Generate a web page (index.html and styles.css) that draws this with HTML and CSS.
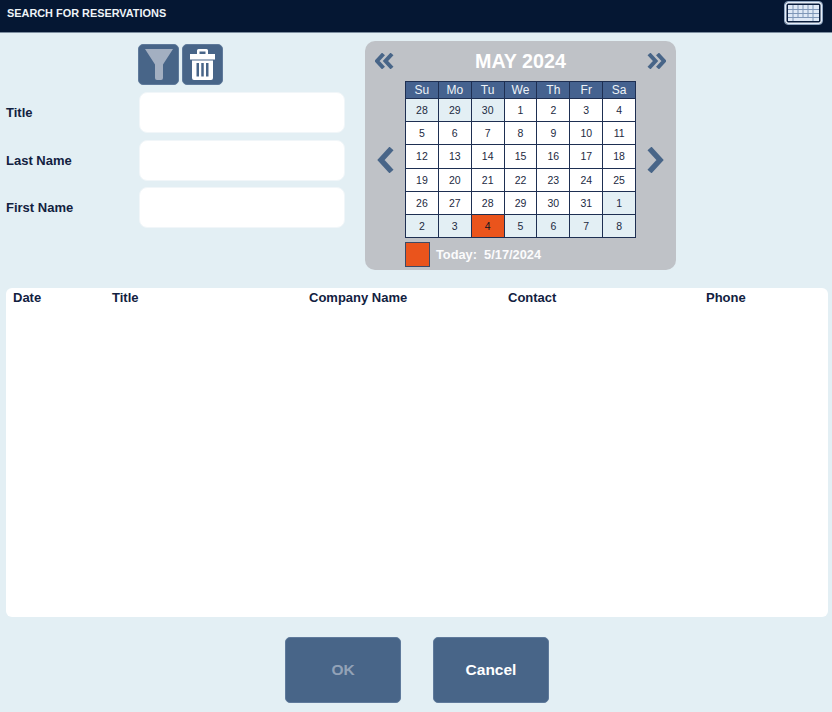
FILE: index.html
```html
<!DOCTYPE html>
<html>
<head>
    <title>Search for Reservations</title>
    <link rel="stylesheet" href="styles.css">
</head>
<body>
    <div class="title-bar">
        <span class="title-text">SEARCH FOR RESERVATIONS</span>
        <button class="keyboard-btn">
            <svg width="39" height="24" viewBox="0 0 39 24">
                <rect x="0.500" y="0.500" width="38" height="23" rx="3.500" fill="#0a1d3c" stroke="#8fa6c2" stroke-width="1"/>
                <rect x="1.750" y="1.750" width="35.500" height="20.500" rx="2.500" fill="#0a1d3c" stroke="#e6eef8" stroke-width="1.500"/>
                <rect x="4" y="4" width="31" height="16" fill="#dfe9f6"/>
                <path d="M4 8.500H35M4 12.500H35M4 16.500H35M9 4V16.500M14 4V16.500M19 4V16.500M24 4V16.500M29 4V16.500M9 16.500V20M29 16.500V20" stroke="#7f97b8" stroke-width="1" fill="none"/>
            </svg>
        </button>
    </div>

    <div class="top-section">
        <div class="search-form">
            <div class="tool-buttons">
                <button class="tool-btn">
                    <svg width="28" height="31" viewBox="0 0 28 31">
                        <path d="M0 0H28L18 15.500V29Q18 31 16 31H12Q10 31 10 29V15.500Z" fill="#a3afc1"/>
                    </svg>
                </button>
                <button class="tool-btn">
                    <svg width="25" height="31" viewBox="0 0 25 31">
                        <path d="M0 5H7V1.500Q7 0 8.500 0H16.500Q18 0 18 1.500V5H25V10.500H0ZM9.500 2.500V5H15.500V2.500Z" fill="#fff" fill-rule="evenodd"/>
                        <path d="M2 11.500H23V29Q23 31 21 31H4Q2 31 2 29ZM6.500 14V27.500H9V14ZM11.250 14V27.500H13.750V14ZM16 14V27.500H18.500V14Z" fill="#fff" fill-rule="evenodd"/>
                    </svg>
                </button>
            </div>
            <div class="form-row">
                <label class="field-label">Title</label>
                <input class="field-input" type="text">
            </div>
            <div class="form-row">
                <label class="field-label">Last Name</label>
                <input class="field-input" type="text">
            </div>
            <div class="form-row">
                <label class="field-label">First Name</label>
                <input class="field-input" type="text">
            </div>
        </div>

        <div class="calendar-panel">
            <svg class="year-arrow" width="20" height="16" viewBox="0 0 20 16">
                <path d="M8.500 1L2 8L8.500 15M17 1L10.500 8L17 15" fill="none" stroke="#486588" stroke-width="4"/>
            </svg>
            <div class="month-title">MAY 2024</div>
            <svg class="year-arrow" width="20" height="16" viewBox="0 0 20 16">
                <path d="M3 1L9.500 8L3 15M11.500 1L18 8L11.500 15" fill="none" stroke="#486588" stroke-width="4"/>
            </svg>

            <svg class="month-arrow" width="18" height="26" viewBox="0 0 18 26">
                <path d="M15.500 1.500L5 13L15.500 24.500" fill="none" stroke="#486588" stroke-width="5.500"/>
            </svg>
            <div class="calendar-grid">
                <div class="day-name">Su</div>
                <div class="day-name">Mo</div>
                <div class="day-name">Tu</div>
                <div class="day-name">We</div>
                <div class="day-name">Th</div>
                <div class="day-name">Fr</div>
                <div class="day-name">Sa</div>

                <div class="day other">28</div>
                <div class="day other">29</div>
                <div class="day other">30</div>
                <div class="day">1</div>
                <div class="day">2</div>
                <div class="day">3</div>
                <div class="day">4</div>

                <div class="day">5</div>
                <div class="day">6</div>
                <div class="day">7</div>
                <div class="day">8</div>
                <div class="day">9</div>
                <div class="day">10</div>
                <div class="day">11</div>

                <div class="day">12</div>
                <div class="day">13</div>
                <div class="day">14</div>
                <div class="day">15</div>
                <div class="day">16</div>
                <div class="day">17</div>
                <div class="day">18</div>

                <div class="day">19</div>
                <div class="day">20</div>
                <div class="day">21</div>
                <div class="day">22</div>
                <div class="day">23</div>
                <div class="day">24</div>
                <div class="day">25</div>

                <div class="day">26</div>
                <div class="day">27</div>
                <div class="day">28</div>
                <div class="day">29</div>
                <div class="day">30</div>
                <div class="day">31</div>
                <div class="day other">1</div>

                <div class="day other">2</div>
                <div class="day other">3</div>
                <div class="day selected">4</div>
                <div class="day other">5</div>
                <div class="day other">6</div>
                <div class="day other">7</div>
                <div class="day other">8</div>
            </div>
            <svg class="month-arrow" width="18" height="26" viewBox="0 0 18 26">
                <path d="M2.500 1.500L13 13L2.500 24.500" fill="none" stroke="#486588" stroke-width="5.500"/>
            </svg>

            <div class="today-row">
                <div class="today-swatch"></div>
                <span class="today-text">Today:&nbsp; 5/17/2024</span>
            </div>
        </div>
    </div>

    <div class="results">
        <div class="results-head">
            <div>Date</div>
            <div>Title</div>
            <div>Company Name</div>
            <div>Contact</div>
            <div>Phone</div>
        </div>
    </div>

    <div class="actions">
        <button class="action-btn disabled">OK</button>
        <button class="action-btn">Cancel</button>
    </div>
</body>
</html>
```

FILE: styles.css
```css
body {
    margin: 0;
    height: 712px;
    overflow: hidden;
    font-family: "Liberation Sans", Arial, sans-serif;
    background-color: #e3eff4;
    color: #12213f;
}

button {
    font-family: inherit;
    padding: 0;
    border: none;
}

.title-bar {
    height: 32px;
    display: flex;
    align-items: center;
    justify-content: space-between;
    padding: 0 9px 0 7px;
    background-color: #051733;
    border-bottom: 1px solid #7d8ea0;
}

.title-text {
    font-size: 10.900px;
    font-weight: bold;
    color: #eef3f7;
    margin-top: -6px;
}

.keyboard-btn {
    width: 39px;
    height: 24px;
    margin-top: -7px;
    background: none;
    display: flex;
}

.top-section {
    display: flex;
    padding: 8px 0 0 6px;
}

.search-form {
    width: 339px;
    margin-right: 20px;
    padding-top: 3px;
}

.tool-buttons {
    display: flex;
    gap: 3px;
    margin: 0 0 7px 132px;
}

.tool-btn {
    width: 41px;
    height: 41px;
    display: flex;
    align-items: center;
    justify-content: center;
    box-sizing: border-box;
    background-color: #486588;
    border: 1px solid #5f7a9b;
    border-radius: 5px;
}

.form-row {
    display: flex;
    align-items: center;
    margin-bottom: 6.700px;
}

.field-label {
    width: 133px;
    font-size: 13px;
    font-weight: bold;
}

.field-input {
    width: 206px;
    height: 41px;
    box-sizing: border-box;
    border: 1px solid #f1f6f9;
    border-radius: 8px;
    background-color: #fff;
}

.calendar-panel {
    width: 311px;
    height: 229px;
    display: grid;
    grid-template-columns: 40px 231px 40px;
    grid-template-rows: 40px 157px 32px;
    justify-items: center;
    align-items: center;
    background-color: #bfc2c7;
    border-radius: 10px;
}

.month-title {
    font-size: 19.700px;
    font-weight: bold;
    color: #fff;
}

.calendar-grid {
    display: grid;
    grid-template-columns: repeat(7, 32.860px);
    grid-template-rows: 17px repeat(6, 23.170px);
    width: 231px;
    box-sizing: border-box;
    border-left: 1px solid #1e2f52;
    border-top: 1px solid #1e2f52;
}

.day-name {
    display: flex;
    align-items: center;
    justify-content: center;
    box-sizing: border-box;
    background-color: #45628f;
    color: #eef3f7;
    font-size: 12px;
    border-right: 1px solid #1e2f52;
    border-bottom: 1px solid #1e2f52;
}

.day {
    display: flex;
    align-items: center;
    justify-content: center;
    box-sizing: border-box;
    background-color: #fff;
    font-size: 10.500px;
    color: #1c2a3f;
    border-right: 1px solid #1e2f52;
    border-bottom: 1px solid #1e2f52;
}

.day.other {
    background-color: #e3eff4;
}

.day.selected {
    background-color: #ea541c;
    color: #0a1422;
}

.today-row {
    grid-column: 2;
    justify-self: start;
    display: flex;
    align-items: center;
    gap: 6px;
}

.today-swatch {
    width: 25px;
    height: 25px;
    box-sizing: border-box;
    background-color: #ea541c;
    border: 1px solid #3c4a66;
}

.today-text {
    font-size: 12.800px;
    font-weight: bold;
    color: #fbfbfc;
}

.results {
    height: 329px;
    margin: 18px 4px 0 6px;
    background-color: #fff;
    border-radius: 6px;
}

.results-head {
    display: grid;
    grid-template-columns: 99px 197px 199px 198px auto;
    padding: 2px 0 0 7px;
    font-size: 13px;
    font-weight: bold;
    line-height: 15px;
}

.actions {
    display: flex;
    justify-content: center;
    gap: 32px;
    margin: 20px 0 0 2px;
}

.action-btn {
    width: 116px;
    height: 66px;
    box-sizing: border-box;
    background-color: #486588;
    border: 1px solid #5f7a9b;
    border-radius: 5px;
    font-size: 15.500px;
    font-weight: bold;
    color: #fff;
}

.action-btn.disabled {
    color: #92a2b7;
}
```
